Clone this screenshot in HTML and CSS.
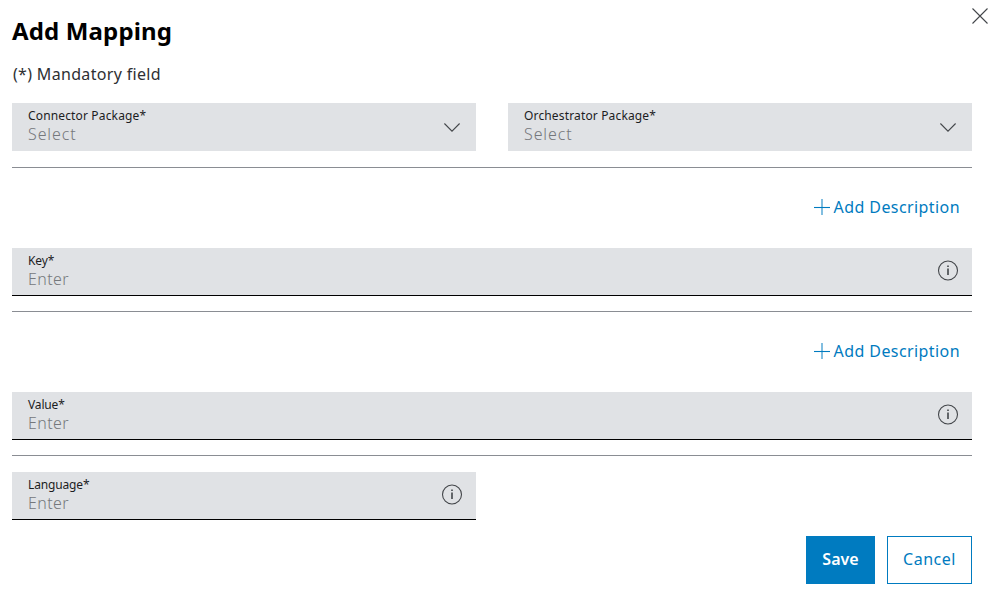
FILE: index.html
```html
<!DOCTYPE html>
<html lang="en">
<head>
    <meta charset="UTF-8">
    <meta name="viewport" content="width=device-width, initial-scale=1.0">
    <title>Add Mapping</title>
    <link rel="stylesheet" href="styles.css">
</head>
<body>

<div class="dialog">
    <button class="close" type="button" aria-label="Close">
        <svg width="16" height="16" viewBox="0 0 16 16"><path d="M0.5 0.5L15.5 15.5M15.5 0.5L0.5 15.5"/></svg>
    </button>

    <h1>Add Mapping</h1>
    <p class="hint">(*) Mandatory field</p>

    <div class="row">
        <div class="field select">
            <div class="field-text">
                <span class="label">Connector Package*</span>
                <span class="placeholder">Select</span>
            </div>
            <svg class="arrow" width="16" height="9" viewBox="0 0 16 9"><path d="M0.4 0.5L8 8.1L15.6 0.5"/></svg>
        </div>
        <div class="field select">
            <div class="field-text">
                <span class="label">Orchestrator Package*</span>
                <span class="placeholder">Select</span>
            </div>
            <svg class="arrow" width="16" height="9" viewBox="0 0 16 9"><path d="M0.4 0.5L8 8.1L15.6 0.5"/></svg>
        </div>
    </div>

    <hr>

    <div class="add-row">
        <a class="add-link" href="#">
            <svg width="16" height="16" viewBox="0 0 16 16"><path d="M0 8.5H16"/><path class="soft" d="M8 0V16"/></svg>
            <span>Add Description</span>
        </a>
    </div>
    <div class="field input">
        <div class="field-text">
            <span class="label">Key*</span>
            <span class="placeholder">Enter</span>
        </div>
        <svg class="info" width="22" height="22" viewBox="0 0 22 22"><circle cx="11" cy="11.5" r="9.5"/><path class="letter" d="M11 6.5V8M11 9.5V16"/></svg>
    </div>

    <hr>

    <div class="add-row">
        <a class="add-link" href="#">
            <svg width="16" height="16" viewBox="0 0 16 16"><path d="M0 8.5H16"/><path class="soft" d="M8 0V16"/></svg>
            <span>Add Description</span>
        </a>
    </div>
    <div class="field input">
        <div class="field-text">
            <span class="label">Value*</span>
            <span class="placeholder">Enter</span>
        </div>
        <svg class="info" width="22" height="22" viewBox="0 0 22 22"><circle cx="11" cy="11.5" r="9.5"/><path class="letter" d="M11 6.5V8M11 9.5V16"/></svg>
    </div>

    <hr>

    <div class="row">
        <div class="field input">
            <div class="field-text">
                <span class="label">Language*</span>
                <span class="placeholder">Enter</span>
            </div>
            <svg class="info" width="22" height="22" viewBox="0 0 22 22"><circle cx="11" cy="11.5" r="9.5"/><path class="letter" d="M11 6.5V8M11 9.5V16"/></svg>
        </div>
    </div>

    <div class="actions">
        <button class="btn save" type="button">Save</button>
        <button class="btn cancel" type="button">Cancel</button>
    </div>
</div>

</body>
</html>
```
FILE: styles.css
```css
* {
    box-sizing: border-box;
}
body {
    margin: 0;
    background-color: #fff;
    color: #000;
    font-family: "Noto Sans", "Open Sans", sans-serif;
    font-size: 16px;
}
.dialog {
    position: relative;
    padding: 15px 24px 9px 12px;
}
svg {
    display: block;
    flex: none;
    fill: none;
    stroke: #43464a;
    stroke-width: 1.1;
}

/* Header */
.close {
    position: absolute;
    top: 8px;
    right: 8px;
    padding: 0;
    border: 0;
    background: none;
}
h1 {
    margin: 0;
    font-size: 24px;
    font-weight: 700;
    line-height: 32px;
    letter-spacing: 0.15px;
}
.hint {
    margin: 15px 0 17px;
    padding-left: 1px;
    line-height: 24px;
    letter-spacing: 0.32px;
    color: #2e3033;
}

/* Fields */
.row {
    display: grid;
    grid-template-columns: 1fr 1fr;
    gap: 32px;
}
.field {
    display: flex;
    justify-content: space-between;
    height: 48px;
    padding: 0 13px 0 16px;
    background-color: #e0e2e5;
}
.field.select {
    padding-right: 16px;
}
.field.input {
    border-bottom: 1px solid #000;
}
.field-text {
    display: flex;
    flex-direction: column;
    padding-top: 5px;
}
.label {
    font-size: 12px;
    line-height: 16px;
    letter-spacing: -0.15px;
    color: #1c1d1f;
}
.select .label {
    letter-spacing: 0.15px;
}
.placeholder {
    line-height: 21px;
    letter-spacing: 0.4px;
    font-weight: 300;
    color: #75787c;
}
.select .placeholder {
    letter-spacing: 0.9px;
}
.arrow {
    margin-top: 20px;
}
.info {
    margin-top: 11px;
}
.info .letter {
    stroke-width: 1.6;
}
hr {
    height: 1px;
    margin: 16px 0;
    border: 0;
    background-color: #8a8d93;
}
.field.input + hr {
    margin: 15px 0 16px;
}

/* Add description links */
.add-row {
    display: flex;
    justify-content: flex-end;
    height: 64px;
    padding: 11px 12px 0 0;
}
.add-link {
    display: flex;
    align-items: center;
    gap: 4px;
    height: 24px;
    color: #007bc0;
    letter-spacing: 0.42px;
    text-decoration: none;
}
.add-link svg {
    stroke: #007bc0;
}
.add-link .soft {
    stroke-opacity: 0.9;
}

/* Buttons */
.actions {
    display: flex;
    justify-content: flex-end;
    gap: 12px;
    margin-top: 16px;
}
.btn {
    height: 48px;
    padding: 0 0 2px;
    border: 1px solid #007bc0;
    font-family: inherit;
    font-size: 16px;
}
.save {
    width: 69px;
    background-color: #007bc0;
    color: #fff;
    font-weight: 600;
}
.cancel {
    width: 85px;
    background-color: #fff;
    color: #007bc0;
    letter-spacing: 0.5px;
}
```
